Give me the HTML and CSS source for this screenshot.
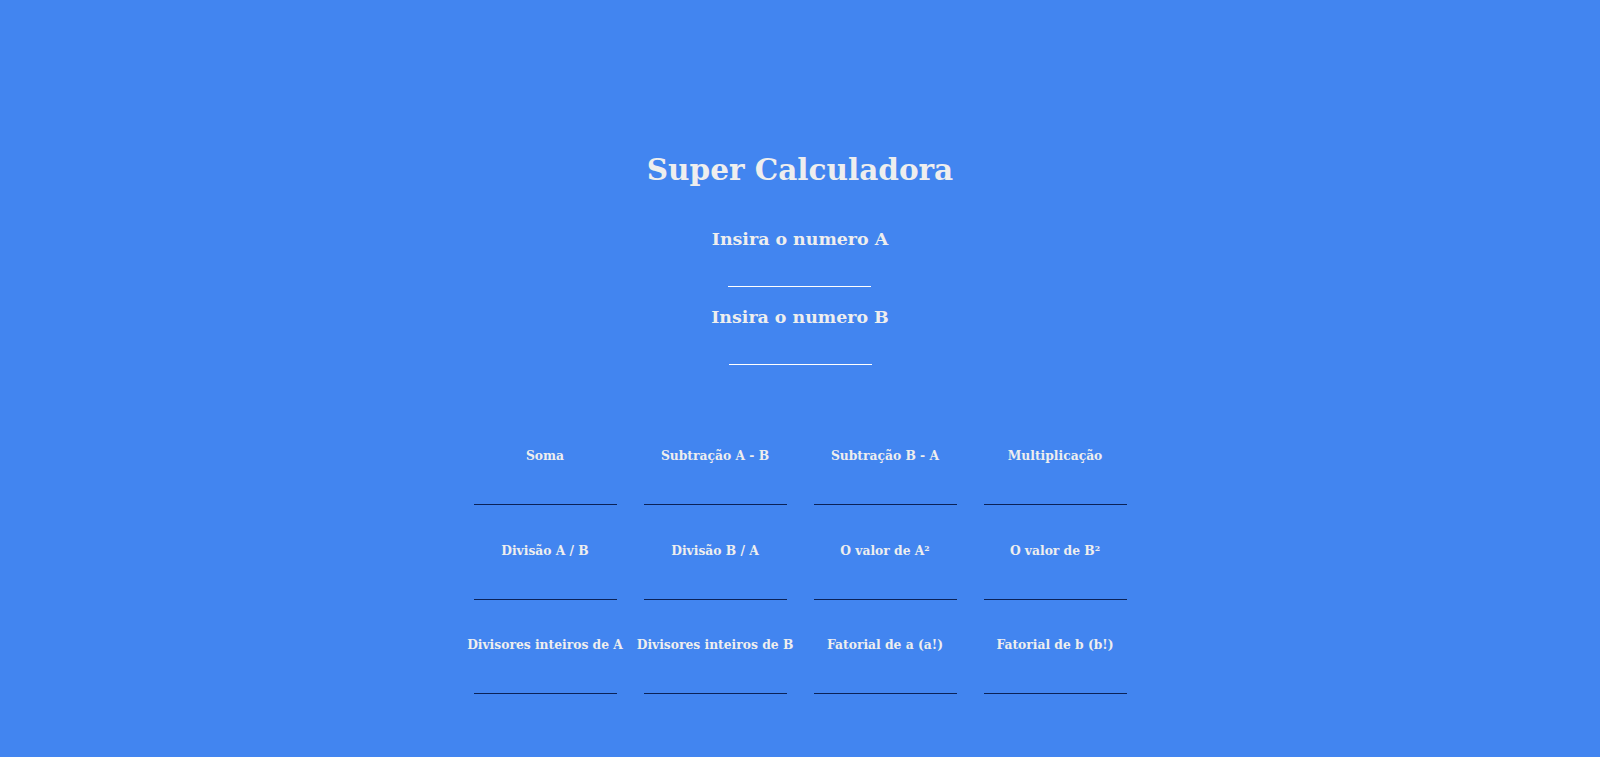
FILE: index.html
```html
<!DOCTYPE html>
<html lang="pt">
<head>
<meta charset="utf-8">
<title>Super Calculadora</title>
<link rel="stylesheet" href="styles.css">
</head>
<body>
<main class="page">
  <h1 class="title">Super Calculadora</h1>
  <section class="inputs">
    <div class="field">
      <label class="field-label" for="a">Insira o numero A</label>
      <input class="field-input" id="a" type="text">
    </div>
    <div class="field">
      <label class="field-label" for="b">Insira o numero B</label>
      <input class="field-input" id="b" type="text">
    </div>
  </section>
  <section class="results">
    <div class="cell"><span class="cell-label">Soma</span><input class="cell-input" type="text"></div>
    <div class="cell"><span class="cell-label">Subtração A - B</span><input class="cell-input" type="text"></div>
    <div class="cell"><span class="cell-label">Subtração B - A</span><input class="cell-input" type="text"></div>
    <div class="cell"><span class="cell-label">Multiplicação</span><input class="cell-input" type="text"></div>
    <div class="cell"><span class="cell-label">Divisão A / B</span><input class="cell-input" type="text"></div>
    <div class="cell"><span class="cell-label">Divisão B / A</span><input class="cell-input" type="text"></div>
    <div class="cell"><span class="cell-label">O valor de A²</span><input class="cell-input" type="text"></div>
    <div class="cell"><span class="cell-label">O valor de B²</span><input class="cell-input" type="text"></div>
    <div class="cell"><span class="cell-label">Divisores inteiros de A</span><input class="cell-input" type="text"></div>
    <div class="cell"><span class="cell-label">Divisores inteiros de B</span><input class="cell-input" type="text"></div>
    <div class="cell"><span class="cell-label">Fatorial de a (a!)</span><input class="cell-input" type="text"></div>
    <div class="cell"><span class="cell-label">Fatorial de b (b!)</span><input class="cell-input" type="text"></div>
  </section>
</main>
</body>
</html>
```

FILE: styles.css
```css
html, body {
  margin: 0;
  padding: 0;
  background: #4285f0;
}
body {
  font-family: "DejaVu Serif", "Liberation Serif", serif;
  color: #eeeeee;
  min-height: 757px;
}
.page {
  display: flex;
  flex-direction: column;
  align-items: center;
  padding-top: 150px;
}
.title {
  margin: 0;
  font-size: 29.5px;
  line-height: 40px;
  font-weight: bold;
}
.inputs {
  display: flex;
  flex-direction: column;
  align-items: center;
  gap: 15px;
  margin-top: 34px;
}
.field {
  display: flex;
  flex-direction: column;
  align-items: center;
}
.field-label {
  font-size: 17.4px;
  font-weight: bold;
  line-height: 30px;
}
.field-input {
  width: 143px;
  height: 30px;
  margin: 3px 0 0;
  box-sizing: border-box;
  border: none;
  border-bottom: 1px solid #ffffff;
  background: transparent;
  outline: none;
}
.results {
  display: grid;
  grid-template-columns: repeat(4, 170px);
  grid-auto-rows: 94.5px;
  margin-top: 81px;
}
.cell {
  display: flex;
  flex-direction: column;
  align-items: center;
}
.cell-label {
  font-size: 12.3px;
  font-weight: bold;
  line-height: 20px;
  white-space: nowrap;
}
.cell-input {
  width: 143px;
  height: 30px;
  margin: 9px 0 0;
  box-sizing: border-box;
  border: none;
  border-bottom: 1px solid #0b2257;
  background: transparent;
  outline: none;
}
```
